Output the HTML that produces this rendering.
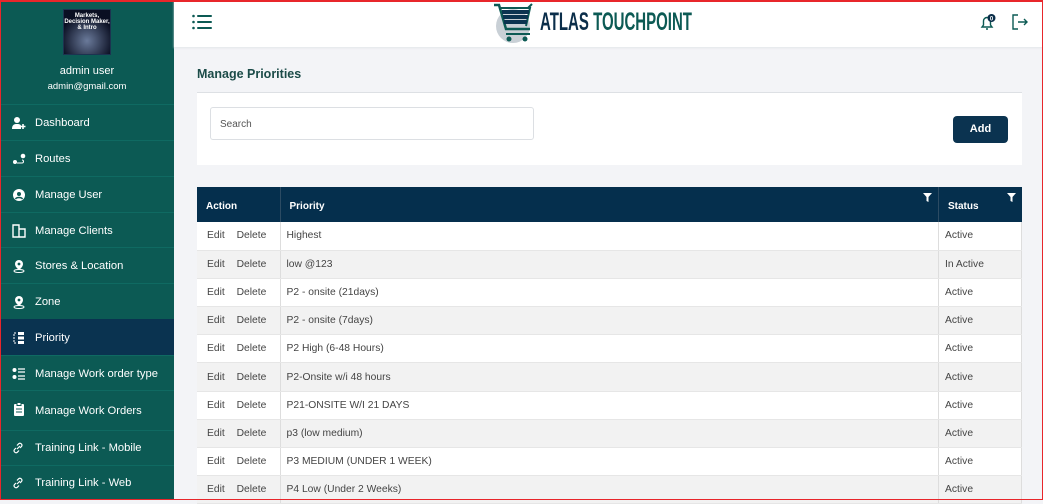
<!DOCTYPE html>
<html><head><meta charset="utf-8"><style>
*{box-sizing:border-box;margin:0;padding:0}
body{width:1043px;height:500px;overflow:hidden;font-family:"Liberation Sans",sans-serif;background:#f3f4f7;position:relative}
.frame{position:absolute;inset:0;border:1px solid #e8262b;border-top-width:2px;pointer-events:none;z-index:10}
.side{position:absolute;left:0;top:0;width:174px;height:500px;background:#0c5a54;color:#fff}
.avatar{position:absolute;left:63px;top:9px;width:48px;height:46px;background:radial-gradient(circle at 50% 70%,#6a7a9a,#0a0f22 70%);border:1px solid #1c3350;font-size:6px;color:#fff;text-align:center;line-height:6px;padding-top:3px;font-weight:bold}
.uname{position:absolute;top:65px;width:174px;text-align:center;font-size:11px}
.umail{position:absolute;top:81px;width:174px;text-align:center;font-size:9.5px}
.item{position:absolute;left:0;width:174px;height:36px;border-top:1px solid #0f6a62;font-size:11.2px;display:flex;align-items:center;padding-left:35px}
.item svg{position:absolute;left:12px;top:11px}
.item.act{background:#0a3350;border-top-color:#0a3350}
.top{position:absolute;left:174px;top:0;width:869px;height:47px;background:#fff;box-shadow:0 1px 2px #e4e6ea}
h1{position:absolute;left:197px;top:67px;font-size:12.5px;color:#1b4b48;font-weight:bold}
.card{position:absolute;left:197px;top:92px;width:825px;height:73px;background:#fff;border-top:1px solid #dde0e4}
.search{position:absolute;left:13px;top:14px;width:324px;height:33px;border:1px solid #dcdfe3;border-radius:3px;font-size:10px;color:#555;padding:11px 9px}
.add{position:absolute;left:756px;top:23px;width:55px;height:27px;background:#0b3350;border-radius:4px;color:#fff;font-weight:bold;font-size:11px;text-align:center;line-height:27px}
table{position:absolute;left:197px;top:187px;width:825px;border-collapse:collapse;font-size:10.3px;color:#444;background:#fff}
th{background:#052f4d;color:#fff;text-align:left;height:35px;font-size:10px;padding:0 9px;border-right:1px solid #2c4b63;position:relative;padding-top:3px}
td{height:28.2px;padding:0 6px;border-right:1px solid #ddd;border-bottom:1px solid #e6e6e6}
tr:nth-child(odd) td{background:#f2f2f2}
td:first-child{padding-left:10px;word-spacing:9px}
.f{position:absolute;right:6px;top:6px}
</style></head><body>
<div class="side">
<div class="avatar">Markets,<br>Decision Maker,<br>&amp; Intro</div>
<div class="uname">admin user</div>
<div class="umail">admin@gmail.com</div>
<div class="item" style="top:104px"><svg width="14" height="14" viewBox="0 0 14 14"><circle cx="5" cy="4" r="3" fill="#fff"/><path d="M0 13c0-4 2-5 5-5s4 1 4 2v3z" fill="#fff"/><path d="M11 8v5M8.5 10.5h5" stroke="#fff" stroke-width="1.6"/></svg>Dashboard</div>
<div class="item" style="top:140px"><svg width="14" height="14" viewBox="0 0 14 14"><circle cx="3" cy="10" r="2" fill="#fff"/><circle cx="11" cy="4" r="2.3" fill="#fff"/><path d="M5 11h5c2 0 2-3 0-3" stroke="#fff" fill="none"/></svg>Routes</div>
<div class="item" style="top:176px"><svg width="14" height="14" viewBox="0 0 14 14"><circle cx="7" cy="7" r="6" fill="#fff"/><circle cx="7" cy="6" r="2" fill="#0c5a54"/><path d="M3.5 11c1-2 6-2 7 0" stroke="#0c5a54" stroke-width="1.5" fill="none"/></svg>Manage User</div>
<div class="item" style="top:212px"><svg width="14" height="14" viewBox="0 0 14 14"><path d="M1 1h6v12H1zM7 5h6v8H7z" stroke="#fff" stroke-width="1.4" fill="none"/></svg>Manage Clients</div>
<div class="item" style="top:247px"><svg width="14" height="14" viewBox="0 0 14 14"><path d="M7 1a4 4 0 0 1 4 4c0 3-4 6-4 6S3 8 3 5a4 4 0 0 1 4-4z" fill="#fff"/><circle cx="7" cy="5" r="1.4" fill="#0c5a54"/><ellipse cx="7" cy="12" rx="5" ry="1.5" stroke="#fff" fill="none"/></svg>Stores &amp; Location</div>
<div class="item" style="top:283px"><svg width="14" height="14" viewBox="0 0 14 14"><path d="M7 1a4 4 0 0 1 4 4c0 3-4 6-4 6S3 8 3 5a4 4 0 0 1 4-4z" fill="#fff"/><circle cx="7" cy="5" r="1.4" fill="#0c5a54"/><ellipse cx="7" cy="12" rx="5" ry="1.5" stroke="#fff" fill="none"/></svg>Zone</div>
<div class="item act" style="top:319px"><svg width="14" height="14" viewBox="0 0 14 14"><path d="M4 2H2v10h2" stroke="#fff" fill="none" stroke-dasharray="2 1"/><rect x="6" y="1" width="6" height="3" fill="#fff"/><rect x="6" y="5.5" width="6" height="3" fill="#fff"/><rect x="6" y="10" width="6" height="3" fill="#fff"/></svg>Priority</div>
<div class="item" style="top:355px"><svg width="14" height="14" viewBox="0 0 14 14"><circle cx="2.5" cy="3" r="2" fill="#fff"/><circle cx="2.5" cy="10" r="2" fill="#fff"/><path d="M6 2h7M6 5h7M6 9h7M6 12h7" stroke="#fff" stroke-width="1.2"/></svg>Manage Work order type</div>
<div class="item" style="top:390px;height:40px"><svg width="14" height="14" viewBox="0 0 14 14"><rect x="2" y="2" width="10" height="12" rx="1" fill="#fff"/><rect x="5" y="0.5" width="4" height="3" fill="#fff" stroke="#0c5a54"/><path d="M4 7h6M4 10h6" stroke="#0c5a54"/></svg>Manage Work Orders</div>
<div class="item" style="top:430px;height:35px"><svg width="12" height="12" viewBox="0 0 12 12"><path d="M5 7l3-3M4 6L2.5 7.5a2 2 0 0 0 2.8 2.8L7 8.5M8 6l1.5-1.5a2 2 0 0 0-2.8-2.8L5 3.5" stroke="#fff" fill="none" stroke-width="1.2"/></svg>Training Link - Mobile</div>
<div class="item" style="top:465px;height:35px"><svg width="12" height="12" viewBox="0 0 12 12"><path d="M5 7l3-3M4 6L2.5 7.5a2 2 0 0 0 2.8 2.8L7 8.5M8 6l1.5-1.5a2 2 0 0 0-2.8-2.8L5 3.5" stroke="#fff" fill="none" stroke-width="1.2"/></svg>Training Link - Web</div>
</div>
<div class="top">
<svg style="position:absolute;left:18px;top:14px" width="20" height="16" viewBox="0 0 20 16"><g fill="#0c5a54"><circle cx="1.5" cy="2" r="1.3"/><circle cx="1.5" cy="8" r="1.3"/><circle cx="1.5" cy="14" r="1.3"/><rect x="5" y="1" width="15" height="2" rx="1"/><rect x="5" y="7" width="15" height="2" rx="1"/><rect x="5" y="13" width="15" height="2" rx="1"/></g></svg>
<svg style="position:absolute;left:318px;top:2px" width="50" height="42" viewBox="0 0 50 42"><circle cx="21" cy="24" r="17" fill="#c9d0d6"/><path d="M2 3h5l7 24h24" stroke="#0c5a54" stroke-width="2.5" fill="none"/><path d="M9 6h29l-4 18" stroke="#0c5a54" stroke-width="2" fill="none"/><rect x="10" y="8" width="27" height="4" fill="#0b3350"/><rect x="11" y="13" width="25" height="4" fill="#0b3350"/><rect x="12" y="18" width="23" height="4" fill="#0b3350"/><path d="M36 6l4-4" stroke="#0c5a54" stroke-width="2"/><path d="M14 32h24" stroke="#0c5a54" stroke-width="2"/><circle cx="17" cy="37" r="2.5" fill="#0c5a54"/><circle cx="33" cy="37" r="2.5" fill="#0c5a54"/></svg>
<div style="position:absolute;left:366px;top:9px;font-size:25px;line-height:26px;font-weight:bold;transform:scale(0.6,1);transform-origin:0 0;white-space:nowrap;width:230px"><span style="color:#0b2e4a">ATLAS</span> <span style="color:#0c5a54">TOUCHPOINT</span></div>
<svg style="position:absolute;left:805px;top:14px" width="18" height="18" viewBox="0 0 18 18"><path d="M3 13h10l-1.5-2V7a3.5 3.5 0 0 0-7 0v4z M7 15h2" stroke="#0c5a54" stroke-width="1.4" fill="none"/><circle cx="12.5" cy="4" r="4" fill="#0b2e4a"/><text x="12.5" y="6.3" font-size="6" fill="#fff" text-anchor="middle" font-family="Liberation Sans" font-weight="bold">0</text></svg>
<svg style="position:absolute;left:838px;top:14px" width="16" height="16" viewBox="0 0 16 16"><path d="M6 1H1v14h5M6 8h9M12 5l3 3-3 3" stroke="#0c5a54" stroke-width="1.4" fill="none"/></svg>
</div>
<h1>Manage Priorities</h1>
<div class="card"><div class="search">Search</div><div class="add">Add</div></div>
<table>
<tr><th style="width:83px">Action</th><th>Priority<svg class="f" width="9" height="9" viewBox="0 0 9 9"><path d="M0 0h9L5.5 4v5l-2-1V4z" fill="#fff"/></svg></th><th style="width:83px;border-right:0">Status<svg class="f" width="9" height="9" viewBox="0 0 9 9"><path d="M0 0h9L5.5 4v5l-2-1V4z" fill="#fff"/></svg></th></tr>
<tr><td>Edit Delete</td><td>Highest</td><td>Active</td></tr>
<tr><td>Edit Delete</td><td>low @123</td><td>In Active</td></tr>
<tr><td>Edit Delete</td><td>P2 - onsite (21days)</td><td>Active</td></tr>
<tr><td>Edit Delete</td><td>P2 - onsite (7days)</td><td>Active</td></tr>
<tr><td>Edit Delete</td><td>P2 High (6-48 Hours)</td><td>Active</td></tr>
<tr><td>Edit Delete</td><td>P2-Onsite w/i 48 hours</td><td>Active</td></tr>
<tr><td>Edit Delete</td><td>P21-ONSITE W/I 21 DAYS</td><td>Active</td></tr>
<tr><td>Edit Delete</td><td>p3 (low medium)</td><td>Active</td></tr>
<tr><td>Edit Delete</td><td>P3 MEDIUM (UNDER 1 WEEK)</td><td>Active</td></tr>
<tr><td>Edit Delete</td><td>P4 Low (Under 2 Weeks)</td><td>Active</td></tr>
</table>
<div class="frame"></div>
</body></html>
